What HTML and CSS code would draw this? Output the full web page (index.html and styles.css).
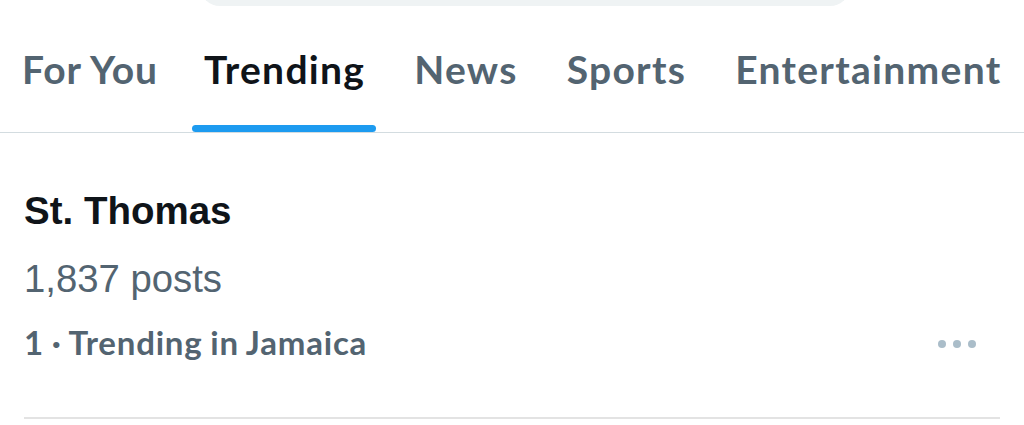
FILE: index.html
```html
<!DOCTYPE html>
<html>
<head>
<meta charset="utf-8">
<link rel="stylesheet" href="styles.css">
</head>
<body>
<div class="page">
  <div class="search-wrap"><div class="search"></div></div>
  <nav class="tabs">
    <div class="tab"><span class="label">For You</span></div>
    <div class="tab active"><span class="label">Trending</span><span class="bar"></span></div>
    <div class="tab"><span class="label">News</span></div>
    <div class="tab"><span class="label">Sports</span></div>
    <div class="tab"><span class="label">Entertainment</span></div>
  </nav>
  <section class="trend">
    <div class="trend-body">
      <div class="title">St. Thomas</div>
      <div class="count">1,837 posts</div>
      <div class="meta-row">
        <div class="meta">1 · Trending in Jamaica</div>
        <div class="more"><span></span><span></span><span></span></div>
      </div>
    </div>
  </section>
</div>
</body>
</html>
```
FILE: styles.css
```css
html, body { margin: 0; padding: 0; background: #fff; }
.page { width: 1024px; height: 425px; overflow: hidden; }
.search-wrap { height: 6px; display: flex; justify-content: center; }
.search { width: 650px; height: 40px; margin-top: -34px; margin-left: 26px; background: #eff3f4; border-radius: 30px; }
.tabs {
  display: flex; gap: 49px; padding-left: 22px; height: 126px;
  border-bottom: 1px solid #d3dce0; box-sizing: content-box;
}
.tab {
  position: relative; display: flex; align-items: flex-start;
  font-family: Lato, "Noto Sans", sans-serif; font-weight: 700; font-size: 39px;
  letter-spacing: 1.3px;
  color: #536471; padding-top: 40px; line-height: 46px;
}
.tab:first-child { letter-spacing: 0.9px; margin-right: -3px; }
.tab.active { color: #0f1419; }
.tab .bar {
  position: absolute; left: -12px; right: -11px; bottom: 0; height: 7px;
  background: #1d9bf0; border-radius: 4px;
}
.trend { padding: 0 24px; }
.trend-body { border-bottom: 2px solid #e3e3e3; height: 286px; box-sizing: border-box; padding-top: 56px; }
.title { font-family: "Liberation Sans", Arial, sans-serif; font-weight: 700; font-size: 38.5px; color: #0f1419; line-height: 44px; }
.count { font-family: "Liberation Sans", Arial, sans-serif; font-size: 38.3px; color: #536471; line-height: 44px; margin-top: 24px; }
.meta-row { display: flex; justify-content: space-between; align-items: center; margin-top: 21px; }
.meta { font-family: Lato, "Noto Sans", sans-serif; font-weight: 700; font-size: 33px; letter-spacing: 0.8px; word-spacing: -1px; color: #536471; line-height: 40px; }
.more { display: flex; gap: 7px; margin-right: 24px; padding-top: 4px; }
.more span { width: 8px; height: 8px; border-radius: 50%; background: #aabdc9; }
```
